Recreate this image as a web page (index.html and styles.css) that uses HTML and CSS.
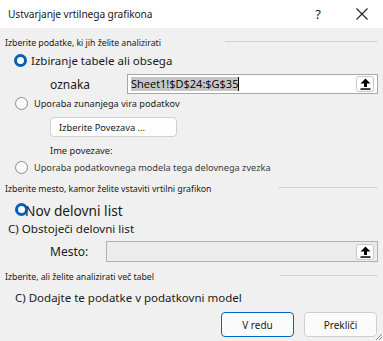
FILE: index.html
```html
<!DOCTYPE html>
<html lang="sl">
<head>
<meta charset="utf-8">
<title>Ustvarjanje vrtilnega grafikona</title>
<link rel="stylesheet" href="styles.css">
</head>
<body>
<div class="dialog">
  <div class="titlebar">
    <span class="title">Ustvarjanje vrtilnega grafikona</span>
    <span class="help">?</span>
    <svg class="close" width="12" height="12" viewBox="0 0 12 12"><path d="M0.5 0.5 L11.5 11.5 M11.5 0.5 L0.5 11.5" stroke="#222" stroke-width="1.1" fill="none"/></svg>
  </div>
  <div class="content">
    <div class="sec-head sec1"><span>Izberite podatke, ki jih želite analizirati</span><i class="rule"></i></div>
    <div class="row radio-row big">
      <span class="radio checked"></span><span>Izbiranje tabele ali obsega</span>
    </div>
    <div class="row field-row">
      <span class="field-label">oznaka</span>
      <div class="input">
        <span class="sel">Sheet1!$D$24:$G$35</span><span class="caret"></span>
        <span class="pick"><svg width="11" height="12" viewBox="0 0 11 12"><path d="M5.5 0.5 L10.5 5.5 L7 5.5 L7 9 L4 9 L4 5.5 L0.5 5.5 Z" fill="#000"/><rect x="0.5" y="10.3" width="10" height="1.5" fill="#000"/></svg></span>
      </div>
    </div>
    <div class="row radio-row small">
      <span class="radio"></span><span>Uporaba zunanjega vira podatkov</span>
    </div>
    <div class="row btn-row">
      <span class="conn-btn">Izberite Povezava ...</span>
    </div>
    <div class="row ime-row">Ime povezave:</div>
    <div class="row radio-row small dim">
      <span class="radio"></span><span>Uporaba podatkovnega modela tega delovnega zvezka</span>
    </div>
    <div class="sec-head sec2"><span>Izberite mesto, kamor želite vstaviti vrtilni grafikon</span><i class="rule"></i></div>
    <div class="row nov-row">
      <span class="radio checked overlap"></span><span>Nov delovni list</span>
    </div>
    <div class="row obs-row">C) Obstoječi delovni list</div>
    <div class="row mesto-row">
      <span class="field-label">Mesto:</span>
      <div class="input disabled">
        <span class="pick"><svg width="11" height="12" viewBox="0 0 11 12"><path d="M5.5 0.5 L10.5 5.5 L7 5.5 L7 9 L4 9 L4 5.5 L0.5 5.5 Z" fill="#000"/><rect x="0.5" y="10.3" width="10" height="1.5" fill="#000"/></svg></span>
      </div>
    </div>
    <div class="sec-head sec3"><span>Izberite, ali želite analizirati več tabel</span><i class="rule"></i></div>
    <div class="row dodaj-row">C) Dodajte te podatke v podatkovni model</div>
    <div class="row actions">
      <span class="btn primary">V redu</span>
      <span class="btn">Prekliči</span>
    </div>
  </div>
  <svg class="grip" width="6" height="6" viewBox="0 0 6 6"><path d="M6 0 L0 6 M6 3 L3 6" stroke="#888" stroke-width="1"/></svg>
</div>
</body>
</html>
```
FILE: styles.css
```css
html, body {
  margin: 0;
  padding: 0;
}
body {
  width: 383px;
  height: 341px;
  overflow: hidden;
  background: #f0f0f0;
  font-family: "Noto Sans", "Open Sans", sans-serif;
  color: #1a1a1a;
}
.dialog {
  position: relative;
  width: 383px;
  height: 341px;
  background: #f0f0f0;
}
.titlebar {
  height: 28px;
  background: #ffffff;
  display: flex;
  align-items: center;
  padding-left: 8px;
}
.title {
  font-size: 10.2px;
  letter-spacing: -0.1px;
  color: #1a1a1a;
  flex: 1;
}
.help {
  font-size: 13px;
  width: 20px;
  margin-right: 28px;
  text-align: center;
}
.close {
  margin-right: 15px;
}
.content {
  padding: 0 5px;
  display: flex;
  flex-direction: column;
}
.row {
  display: flex;
  align-items: center;
}
.sec-head {
  display: flex;
  align-items: center;
  justify-content: space-between;
  height: 16px;
  font-size: 8.8px;
  letter-spacing: -0.05px;
}
.sec-head .rule {
  height: 1px;
  background: #d4d4d4;
  margin-top: -3px;
}
.sec1 { margin-top: 7px; }
.sec1 .rule { width: 153px; }
.sec2 { margin-top: 5px; }
.sec2 .rule { width: 100px; }
.sec3 { margin-top: 7px; }
.sec3 .rule { width: 98px; }

.radio {
  box-sizing: border-box;
  width: 13px;
  height: 13px;
  border-radius: 50%;
  border: 1px solid #8a8a8a;
  background: #fbfbfb;
  flex: none;
}
.radio.checked {
  border: 3.5px solid #005fb8;
  background: #ffffff;
}
.radio-row {
  height: 18px;
}
.radio-row.big {
  font-size: 11.5px;
  padding-left: 9px;
}
.radio-row.big .radio { margin-right: 4px; }
.radio-row.small {
  font-size: 9.2px;
  padding-left: 10px;
}
.radio-row.small .radio { margin-right: 6px; }
.radio-row.dim { color: #3a3a3a; }

.field-row {
  margin-top: 5px;
  height: 20px;
}
.field-label {
  font-size: 12px;
  padding-left: 45px;
}
.field-row .field-label { width: 77px; }
.input {
  box-sizing: border-box;
  flex: 1;
  height: 100%;
  background: #ffffff;
  border: 1px solid #a8a8a8;
  display: flex;
  align-items: center;
  padding-left: 3px;
  padding-right: 3px;
}
.sel {
  background: #c6c6c6;
  font-family: "Open Sans", "Noto Sans", sans-serif;
  font-size: 11px;
  line-height: 14px;
  color: #000;
}
.caret {
  width: 1px;
  height: 14px;
  background: #000;
}
.pick {
  box-sizing: border-box;
  margin-left: auto;
  width: 18px;
  height: 16px;
  border: 1px solid #c8c8c8;
  border-radius: 3px;
  background: #ffffff;
  display: flex;
  align-items: center;
  justify-content: center;
}
.btn-row {
  margin-top: 5px;
  height: 20px;
  padding-left: 45px;
}
.conn-btn {
  box-sizing: border-box;
  width: 127px;
  height: 20px;
  border: 1px solid #d0d0d0;
  border-radius: 4px;
  background: #fdfdfd;
  font-size: 9.3px;
  display: flex;
  align-items: center;
  padding-left: 8px;
}
.ime-row {
  margin-top: 5px;
  height: 16px;
  font-size: 9.3px;
  padding-left: 45px;
}
.nov-row {
  margin-top: 4px;
  height: 18px;
  font-size: 13.7px;
  padding-left: 10px;
}
.radio.overlap {
  margin-right: -3px;
  margin-top: -2px;
  position: relative;
  z-index: 1;
}
.obs-row {
  height: 18px;
  font-size: 11.6px;
  padding-left: 3px;
}
.mesto-row {
  margin-top: 4px;
  height: 21px;
}
.mesto-row .field-label { width: 56px; }
.input.disabled {
  background: #ececec;
  border-color: #b0b0b0;
}
.dodaj-row {
  margin-top: 2px;
  height: 20px;
  font-size: 11.5px;
  padding-left: 10px;
}
.actions {
  margin-top: 5px;
  height: 25px;
  justify-content: flex-end;
  gap: 10px;
  padding-right: 1px;
}
.btn {
  box-sizing: border-box;
  width: 73px;
  height: 25px;
  border: 1px solid #cfcfcf;
  border-radius: 4px;
  background: #fbfbfb;
  font-size: 10px;
  display: flex;
  align-items: center;
  justify-content: center;
}
.btn.primary {
  border-color: #0067c0;
}
.grip {
  position: absolute;
  right: 1px;
  bottom: 1px;
}
```
